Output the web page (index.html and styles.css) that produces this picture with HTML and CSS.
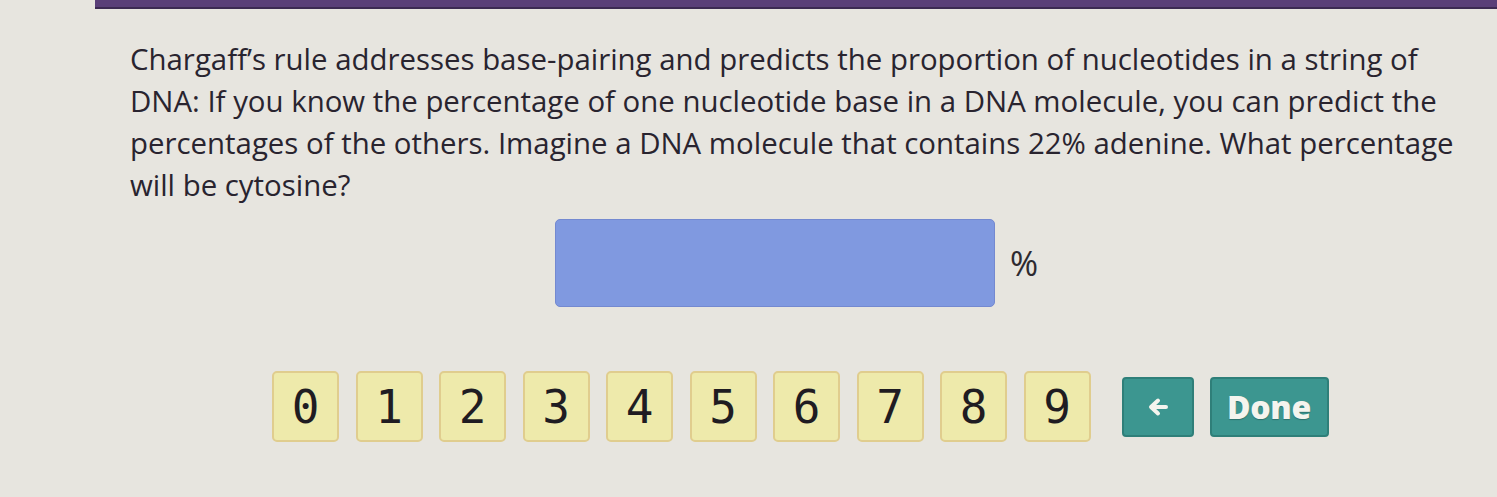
FILE: index.html
```html
<!DOCTYPE html>
<html>
<head>
    <meta charset="utf-8">
    <title>Chargaff's rule</title>
    <link rel="stylesheet" href="styles.css">
</head>
<body>
    <div class="topbar"></div>
    <div class="question">
        <p class="prompt">Chargaff’s rule addresses base-pairing and predicts the proportion of nucleotides in a string of DNA: If you know the percentage of one nucleotide base in a DNA molecule, you can predict the percentages of the others. Imagine a DNA molecule that contains 22% adenine. What percentage will be cytosine?</p>
        <div class="answer">
            <div class="answer-box"></div>
            <span class="unit">%</span>
        </div>
        <div class="keypad">
            <div class="keys">
                <button class="key">0</button>
                <button class="key">1</button>
                <button class="key">2</button>
                <button class="key">3</button>
                <button class="key">4</button>
                <button class="key">5</button>
                <button class="key">6</button>
                <button class="key">7</button>
                <button class="key">8</button>
                <button class="key">9</button>
            </div>
            <button class="btn back">
                <svg width="22" height="20" viewBox="0 0 22 20">
                    <path d="M19 10H5M11 3.5L4 10L11 16.5" fill="none" stroke="#f4f4ee" stroke-width="4" stroke-linecap="round" stroke-linejoin="round"/>
                </svg>
            </button>
            <button class="btn done">Done</button>
        </div>
    </div>
</body>
</html>
```

FILE: styles.css
```css
*{
	margin: 0;
	padding: 0;
	box-sizing: border-box;
}
body{
	background-color: #e7e5df;
	font-family: "Open Sans", "Noto Sans", sans-serif;
	color: #29242f;
}
.topbar{
	height: 9px;
	margin-left: 95px;
	background-color: #5a3f78;
	border-bottom: 2px solid #3c2a52;
}
.question{
	padding: 29px 0 0 130px;
}
.prompt{
	width: 1352px;
	font-size: 29.4px;
	line-height: 42px;
}
.answer{
	display: flex;
	align-items: center;
	margin: 13px 0 0 425px;
}
.answer-box{
	width: 440px;
	height: 88px;
	background-color: #8099e0;
	border: 1px solid #7489d0;
	border-radius: 5px;
}
.unit{
	margin-left: 15px;
	font-size: 34px;
	color: #2d2a30;
}
.keypad{
	display: flex;
	align-items: center;
	margin: 64px 0 0 142px;
}
.keys{
	display: flex;
	gap: 16.5px;
}
.key{
	width: 67px;
	height: 71px;
	background-color: #eeeaab;
	border: 2px solid #e0cd8e;
	border-radius: 5px;
	font-family: "DejaVu Sans Mono", monospace;
	font-size: 46px;
	color: #1f1c22;
}
.btn{
	height: 60px;
	background-color: #3c9690;
	border: 2px solid #2f7f79;
	border-radius: 4px;
	color: #f4f4ee;
}
.back{
	width: 72px;
	margin-left: 31px;
	display: flex;
	align-items: center;
	justify-content: center;
}
.done{
	width: 119px;
	margin-left: 16px;
	font-family: "Open Sans", sans-serif;
	font-weight: 800;
	font-size: 32px;
	letter-spacing: -0.3px;
	text-shadow: 0 1px 1px rgba(0,0,0,0.25);
}
```
